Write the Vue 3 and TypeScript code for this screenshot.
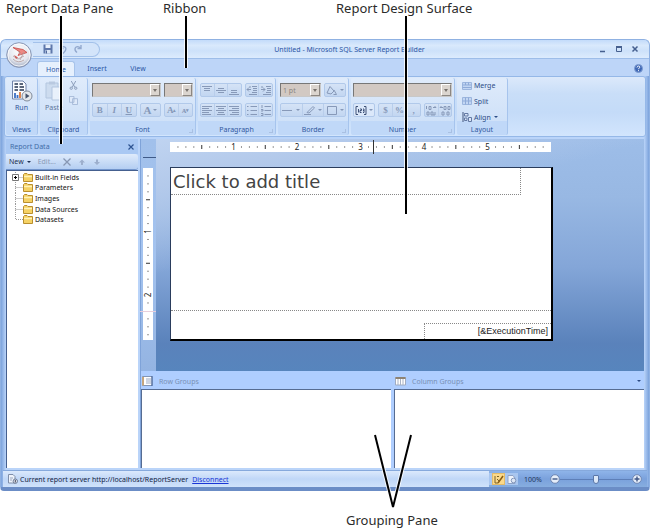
<script setup lang="ts">
import { ref } from 'vue'

interface Tool {
  label: string
  d: string
}
interface Mark {
  at: number
  kind: 'dot' | 'half' | 'inch'
  label: string
}

const EIGHTH = 7.94
const FOOTER_MARK = 18

function marks(count: number): Mark[] {
  return Array.from({ length: count }, (_, i) => {
    const n = i + 1
    return {
      at: n * EIGHTH,
      kind: n % 8 === 0 ? 'inch' : n % 4 === 0 ? 'half' : 'dot',
      label: String(n / 8),
    }
  })
}

const topMarks = marks(47)
// The footer has its own scale, so its marks start again as dots.
const sideMarks = marks(21)
  .filter((_, i) => i + 1 !== FOOTER_MARK)
  .map((m, i): Mark => (i + 1 >= FOOTER_MARK ? { ...m, kind: 'dot' } : m))

const tabs = ['Home', 'Insert', 'View']
const activeTab = ref('Home')
const zoom = ref(50)
const title = ref('Click to add title')

const fields = ['Built-in Fields', 'Parameters', 'Images', 'Data Sources', 'Datasets']

const vertical: Tool[] = [
  { label: 'Align top', d: 'M1 1.5H11M3 3.5H9M3 5.5H9' },
  { label: 'Align middle', d: 'M3 3.5H9M1 5.5H11M3 7.5H9' },
  { label: 'Align bottom', d: 'M3 5.5H9M3 7.5H9M1 9.5H11' },
]
const indents: Tool[] = [
  { label: 'Decrease indent', d: 'M6 1.5H11M7 3.5H11M7 5.5H11M6 7.5H11M3 9.5H11M5 4.5H1M3 2.5L1 4.5L3 6.5M4 1V3' },
  { label: 'Increase indent', d: 'M6 1.5H11M7 3.5H11M7 5.5H11M6 7.5H11M3 9.5H11M1 4.5H5M3 2.5L5 4.5L3 6.5M2 1V3' },
]
const horizontal: Tool[] = [
  { label: 'Align left', d: 'M1 1.5H11M1 3.5H8M1 5.5H11M1 7.5H8M1 9.5H10' },
  { label: 'Center', d: 'M1 1.5H11M3 3.5H9M1 5.5H11M3 7.5H9M2 9.5H10' },
  { label: 'Align right', d: 'M1 1.5H11M4 3.5H11M1 5.5H11M4 7.5H11M2 9.5H11' },
]
const lists: Tool[] = [
  { label: 'Bullets', d: 'M1 1.5H2.500M4.500 1.500H11M1 5.500H2.500M4.500 5.500H11M1 9.500H2.500M4.500 9.500H11' },
  { label: 'Numbering', d: 'M2 0V3M4.500 1.500H11M1 4.500H3V6H1M4.500 5.500H11M1 8.500H3V10.500H1M4.500 9.500H11' },
]
const borders: Tool[] = [
  { label: 'Border style', d: 'M0 5.500H10' },
  { label: 'Border color', d: 'M0 9.500H7M3 7.500L9 1.500L10.500 3L5 8Z' },
  { label: 'Borders', d: 'M1.500 1.500H10.500V9.500H1.500Z' },
]
const decimals: Tool[] = [
  { label: 'Increase decimal', d: 'M1.500 1V4M4 1.500H6V4.500H4ZM2 7H4V10H2ZM6 7H8V10H6ZM10 7V10H8M8 2.500H11M9.500 1L11 2.500' },
  { label: 'Decrease decimal', d: 'M5 1.500H7V4.500H5ZM9 1.500H11V4.500H9ZM3 7H5V10H3ZM8 7H10V10H8ZM4 2.500H1L2.500 1' },
]
</script>

<template>
  <div class="page">
    <header class="captions">
      <span class="cap-data">Report Data Pane</span>
      <span class="cap-ribbon">Ribbon</span>
      <span>Report Design Surface</span>
    </header>

    <main class="window">
      <div class="titlebar">
        <button class="orb" aria-label="Report Builder menu">
          <svg viewBox="0 0 26 26">
            <defs>
              <radialGradient id="orb" cx=".5" cy=".35" r=".65">
                <stop offset="0" stop-color="#fff" /><stop offset=".65" stop-color="#e3e6ee" /><stop offset="1" stop-color="#9aa5bd" />
              </radialGradient>
            </defs>
            <circle cx="13" cy="13" r="12.300" fill="url(#orb)" stroke="#8796b5" />
            <circle cx="13" cy="13" r="11" fill="none" stroke="#fff" stroke-opacity=".8" />
            <path d="M7 5.500L17 7.500L21 10.500L12 13.500L14 10Z" fill="#ec8a84" stroke="#c64a46" stroke-width=".8" />
            <path d="M7 14L12 17L18 14M7 17Q12 22 18 18M12 9L15 13M18 10L14 18" fill="none" stroke="#b39c9c" stroke-width=".8" />
            <path d="M8 13L12 15.500L10 17Z" fill="#cf5c58" />
          </svg>
        </button>
        <div class="quick">
          <button aria-label="Save">
            <svg viewBox="0 0 10 10"><path d="M.5 .5H9.500V9.500H.5Z" fill="#5f78ab" /><path d="M2.500 .5H7.500V4H2.500Z" fill="#e8f0fb" /><path d="M2.500 6H7.500V9.500H2.500Z" fill="#dbe7f7" /><path d="M3.500 6.500V9.500" stroke="#50689c" /></svg>
          </button>
          <button aria-label="Undo">
            <svg viewBox="0 0 10 10"><path d="M2 1V4.500H5.500M2.500 4Q5 1.500 7.500 3.500Q9 6 5 9.500" fill="none" stroke="#93a9ce" stroke-width="1.400" /></svg>
          </button>
          <button aria-label="Redo">
            <svg viewBox="0 0 10 10"><path d="M8 1V4.500H4.500M7.500 4Q5 1.500 2.500 3.500Q1 6 4 8.500" fill="none" stroke="#93a9ce" stroke-width="1.400" /></svg>
          </button>
        </div>
        <h1>Untitled - Microsoft SQL Server Report Builder</h1>
        <div class="controls">
          <button aria-label="Minimize"><svg viewBox="0 0 8 8"><path d="M1 6.500H6" stroke="#46608f" stroke-width="1.400" /></svg></button>
          <button aria-label="Maximize"><svg viewBox="0 0 8 8"><path d="M1.500 2H6.500V6.500H1.500Z" fill="none" stroke="#46608f" /><path d="M1 2H7" stroke="#46608f" stroke-width="2" /></svg></button>
          <button aria-label="Close"><svg viewBox="0 0 8 8"><path d="M1.500 1.500L6.500 6.500M6.500 1.500L1.500 6.500" stroke="#46608f" stroke-width="1.500" /></svg></button>
        </div>
      </div>

      <nav class="tabs">
        <button v-for="t in tabs" :key="t" :class="{ active: t === activeTab }" @click="activeTab = t">{{ t }}</button>
        <button class="help" aria-label="Help">
          <svg viewBox="0 0 9 9"><circle cx="4.500" cy="4.500" r="4" fill="#3f68b5" stroke="#7f9dd2" /><path d="M3 3.500Q3.200 2 4.600 2Q6 2.200 5.800 3.500Q4.500 4.300 4.500 5.200M4.500 6.200V7.200" fill="none" stroke="#fff" /></svg>
        </button>
      </nav>

      <section class="ribbon">
        <div class="group views">
          <div class="body">
            <button class="big">
              <svg viewBox="0 0 22 22">
                <path d="M1.500 1H12L15 4V19H1.500Z" fill="#fbfcff" stroke="#7184aa" />
                <path d="M3.500 4H7M8.500 4H12M3.500 7H7M8.500 7H13M3.500 10H7M8.500 10H13" stroke="#26354f" stroke-width="1.500" />
                <path d="M4 18V13M6.500 18V15" stroke="#3a6fc4" stroke-width="1.800" /><path d="M9 18V12" stroke="#d8783c" stroke-width="1.800" />
                <circle cx="16" cy="16" r="5" fill="#e4e8ec" stroke="#808a98" /><path d="M14.500 13.200L18.500 16L14.500 18.800Z" fill="#45536b" />
              </svg>
              Run
            </button>
          </div>
          <h2>Views</h2>
        </div>

        <div class="group clipboard">
          <div class="body">
            <button class="big faded">
              <svg viewBox="0 0 22 22">
                <path d="M3 3H15V18H3Z" fill="#cddcef" stroke="#b3c6df" /><path d="M6 1.500H12V4.500H6Z" fill="#b9c9e0" />
                <path d="M9 7H18V20H9Z" fill="#e9f1fb" stroke="#b3c6df" />
              </svg>
              Paste
            </button>
            <div class="stack">
              <button aria-label="Cut"><svg viewBox="0 0 10 10"><path d="M2.500 0L6.500 7M7.500 0L3.500 7" stroke="#8496b4" /><circle cx="2.500" cy="8" r="1.300" fill="none" stroke="#8496b4" /><circle cx="7.500" cy="8" r="1.300" fill="none" stroke="#8496b4" /></svg></button>
              <button aria-label="Copy"><svg viewBox="0 0 10 10"><path d="M.5 .5H5.500V7H.5ZM4 3H9.500V9.500H4Z" fill="#dfeafa" stroke="#a3b7d6" /></svg></button>
            </div>
          </div>
          <h2>Clipboard</h2>
        </div>

        <div class="group font">
          <div class="body rows">
            <div class="row">
              <label class="combo wide"><select aria-label="Font family"><option></option></select><i></i></label>
              <label class="combo"><select aria-label="Font size"><option></option></select><i></i></label>
            </div>
            <div class="row">
              <div class="set wide">
                <button class="glyph"><b>B</b></button><button class="glyph"><em>I</em></button><button class="glyph"><u>U</u></button>
              </div>
              <div class="set color"><button class="glyph large drop">A</button></div>
              <div class="set last"><button class="glyph">A<sup>▴</sup></button><button class="glyph">ᴀ<sup>▾</sup></button></div>
            </div>
          </div>
          <h2>Font</h2><span class="corner"></span>
        </div>

        <div class="group paragraph">
          <div class="body rows">
            <div class="row">
              <div class="set three"><button v-for="t in vertical" :key="t.label" :aria-label="t.label"><svg viewBox="0 0 12 11"><path :d="t.d" /></svg></button></div>
              <div class="set two"><button v-for="t in indents" :key="t.label" :aria-label="t.label"><svg viewBox="0 0 12 11"><path :d="t.d" /></svg></button></div>
            </div>
            <div class="row">
              <div class="set three"><button v-for="t in horizontal" :key="t.label" :aria-label="t.label"><svg viewBox="0 0 12 11"><path :d="t.d" /></svg></button></div>
              <div class="set two"><button v-for="t in lists" :key="t.label" :aria-label="t.label"><svg viewBox="0 0 12 11"><path :d="t.d" /></svg></button></div>
            </div>
          </div>
          <h2>Paragraph</h2><span class="corner"></span>
        </div>

        <div class="group border">
          <div class="body rows">
            <div class="row">
              <label class="combo wide"><select aria-label="Border width"><option>1 pt</option></select><i></i></label>
              <div class="set fill"><button class="drop" aria-label="Fill color"><svg viewBox="0 0 12 11"><path d="M1 8L4 1.500L8 6L5 9ZM8 5L10.500 9.500H7.500" /></svg></button></div>
            </div>
            <div class="row">
              <div class="set all"><button v-for="t in borders" :key="t.label" class="drop" :aria-label="t.label"><svg viewBox="0 0 12 11"><path :d="t.d" /></svg></button></div>
            </div>
          </div>
          <h2>Border</h2><span class="corner"></span>
        </div>

        <div class="group number">
          <div class="body rows">
            <div class="row"><label class="combo wide"><select aria-label="Number format"><option></option></select><i></i></label></div>
            <div class="row">
              <div class="set sample">
                <button class="drop" aria-label="Placeholder styles"><svg viewBox="0 0 12 11" class="dark"><path d="M3 1.500H1V9.500H3M9 1.500H11V9.500H9M3.500 4V7.500M5 4H6.500V5.500H5V7.500H6.500M8 4H9V7.500H8M8 5.500H9" /></svg></button>
              </div>
              <div class="set three"><button class="glyph">$</button><button class="glyph">%</button><button class="glyph">,</button></div>
              <div class="set two"><button v-for="t in decimals" :key="t.label" :aria-label="t.label"><svg viewBox="0 0 12 11"><path :d="t.d" /></svg></button></div>
            </div>
          </div>
          <h2>Number</h2><span class="corner"></span>
        </div>

        <div class="group layout">
          <div class="body lines">
            <button><svg viewBox="0 0 10 10"><path d="M.5 1.500H9.500V8.500H.5Z" fill="#c2d6f3" stroke="#9cb6de" /><path d="M.5 4H9.500M.5 6.500H9.500M3.500 1.500V4M6.500 1.500V4" stroke="#8fabd8" fill="none" /></svg>Merge</button>
            <button><svg viewBox="0 0 10 10"><path d="M.5 1.500H9.500V8.500H.5Z" fill="#c2d6f3" stroke="#9cb6de" /><path d="M3.500 1.500V8.500M6.500 1.500V8.500M.5 5H9.500" stroke="#8fabd8" /></svg>Split</button>
            <button class="drop"><svg viewBox="0 0 10 10"><path d="M1 0V10" stroke="#43577e" /><path d="M2.500 1.500H6V4H2.500ZM2.500 6H5V8.500H2.500ZM6.500 5.500H9.500V9.500H6.500Z" fill="#dbe6f8" stroke="#6379a3" /></svg>Align</button>
          </div>
          <h2>Layout</h2>
        </div>
      </section>

      <div class="work">
        <aside class="data">
          <div class="data-head">
            <h2>Report Data</h2>
            <button aria-label="Close pane"><svg viewBox="0 0 6 6"><path d="M.5 .5L5.500 5.500M5.500 .5L.5 5.500" stroke="#2d5391" stroke-width="1.200" /></svg></button>
          </div>
          <div class="data-tools">
            <button class="drop">New</button>
            <button class="off">Edit...</button>
            <button aria-label="Delete"><svg viewBox="0 0 8 8"><path d="M.5 .5L7.500 7.500M7.500 .5L.5 7.500" stroke="#8797b3" stroke-width="1.300" /></svg></button>
            <button aria-label="Move up"><svg viewBox="0 0 8 8"><path d="M4 1.500L7 4.500H5V7H3V4.500H1Z" fill="#9dafcd" /></svg></button>
            <button aria-label="Move down"><svg viewBox="0 0 8 8"><path d="M4 7L7 4H5V1.500H3V4H1Z" fill="#9dafcd" /></svg></button>
          </div>
          <div class="tree">
            <ul>
              <li v-for="(f, i) in fields" :key="f">
                <svg class="branch" viewBox="0 0 11 11">
                  <path :d="i < fields.length - 1 ? 'M3.5 0V11M3.5 5.5H11' : 'M3.5 0V5.5H11'" fill="none" stroke="#9a9a9a" stroke-dasharray="1 1" />
                  <g v-if="i === 0"><path d="M.5 2.500H6.500V8.500H.5Z" fill="#fff" stroke="#777" /><path d="M2 5.500H5M3.500 4V7" stroke="#000" /></g>
                </svg>
                <svg class="folder" viewBox="0 0 10 9"><path d="M.5 8.500V1.500L1.500 .5H4L5 1.500H9.500V8.500Z" fill="#f5d265" stroke="#b98f2f" /><path d="M1 3.500H9" stroke="#fff3b8" stroke-width="1.500" /></svg>
                <span>{{ f }}</span>
              </li>
            </ul>
          </div>
        </aside>

        <div class="design">
          <div class="surface">
            <div class="side">
              <svg class="side-ruler" viewBox="0 0 10 172">
                <template v-for="m in sideMarks" :key="m.at">
                  <text v-if="m.kind === 'inch'" :transform="`translate(8 ${m.at}) rotate(-90)`" text-anchor="middle">{{ m.label }}</text>
                  <path v-else-if="m.kind === 'half'" :d="`M3 ${m.at}H7`" />
                  <path v-else :d="`M4.5 ${m.at}H5.5`" />
                </template>
                <path class="divider" d="M-3 143.500H13" />
              </svg>
            </div>
            <div class="canvas">
              <svg class="top-ruler" viewBox="0 0 381 10">
                <template v-for="m in topMarks" :key="m.at">
                  <text v-if="m.kind === 'inch'" :x="m.at" y="8" text-anchor="middle">{{ m.label }}</text>
                  <path v-else-if="m.kind === 'half'" :d="`M${m.at} 3V7`" />
                  <path v-else :d="`M${m.at} 4.500V5.500`" />
                </template>
                <path class="cursor" d="M203.500 -2V12" />
              </svg>
              <article class="report">
                <input v-model="title" class="report-title" aria-label="Report title">
                <div class="report-body"></div>
                <footer><span>[&amp;ExecutionTime]</span></footer>
              </article>
            </div>
          </div>

          <div class="groups">
            <section>
              <h2><svg viewBox="0 0 11 10"><path d="M.5 .5H10V9.500H.5Z" fill="#fff" stroke="#8295b5" /><path d="M1 1V9.500" stroke="#c5a57c" stroke-width="2" /><path d="M4 3H9M4 5H9M4 7H9" stroke="#9caac4" /><path d="M10 0V10" stroke="#3e5c92" /></svg>Row Groups</h2>
              <div class="box"></div>
            </section>
            <section>
              <h2><svg viewBox="0 0 11 10"><path d="M.5 1.500H10.500V9H.5Z" fill="#fff" stroke="#a0abc0" /><path d="M.5 2H10.500" stroke="#8e8374" stroke-width="2" /><path d="M3 3V9M5.500 3V9M8 3V9" stroke="#a9b3c6" /></svg>Column Groups<button aria-label="Grouping options" class="drop"></button></h2>
              <div class="box"></div>
            </section>
          </div>
        </div>
      </div>

      <div class="status">
        <div class="server">
          <svg viewBox="0 0 10 10"><path d="M.5 .5H5L7 2.500V9H.5Z" fill="#eef3fb" stroke="#7f8ea9" /><path d="M2 4H5M2 6H4" stroke="#98a5bd" /><circle cx="7.300" cy="7.200" r="2.200" fill="#dfe5ef" stroke="#6d7b95" /><path d="M7.300 6V8.500" stroke="#445" /></svg>
          <span>Current report server http://localhost/ReportServer</span>
          <a href="#">Disconnect</a>
        </div>
        <div class="modes">
          <button class="on" aria-label="Design"><svg viewBox="0 0 10 9"><path d="M1 1V8H4M3 1.500H5M3 4L5 6" stroke="#7a6329" fill="none" /><path d="M4 8L9 1" stroke="#8a5d12" stroke-width="1.500" /></svg></button>
          <button aria-label="Run"><svg viewBox="0 0 10 9"><path d="M1 .5H6L8 3V8.500H1Z" fill="#eef3fb" stroke="#8fa3c6" /><circle cx="6.500" cy="5.500" r="2.300" fill="#dde6f4" stroke="#8497bb" /></svg></button>
        </div>
        <div class="zoom">
          <span>100%</span>
          <button aria-label="Zoom out"><svg viewBox="0 0 10 10"><circle cx="5" cy="5" r="4.300" fill="#e6eefa" stroke="#6f86b1" /><path d="M2.500 5H7.500" stroke="#3f5684" stroke-width="1.400" /></svg></button>
          <input v-model="zoom" type="range" min="0" max="100" aria-label="Zoom">
          <button aria-label="Zoom in"><svg viewBox="0 0 10 10"><circle cx="5" cy="5" r="4.300" fill="#e6eefa" stroke="#6f86b1" /><path d="M2.500 5H7.500M5 2.500V7.500" stroke="#3f5684" stroke-width="1.400" /></svg></button>
        </div>
      </div>
    </main>

    <p class="caption-bottom">Grouping Pane</p>

    <svg class="pointers" viewBox="0 0 650 529" aria-hidden="true">
      <g v-for="layer in ['halo', 'ink']" :key="layer" :class="layer">
        <path d="M61 16V144M186 16V68M406 16V214" />
        <path d="M375 435L393 507L411 435" />
      </g>
    </svg>
  </div>
</template>

<style>
body {
  margin: 0;
  background: #fff;
}
</style>

<style scoped>
* {
  box-sizing: border-box;
}
.page {
  position: relative;
  display: flex;
  flex-direction: column;
  min-height: 100vh;
  font: 7px/9px "Noto Sans", "Open Sans", sans-serif;
  color: #22365c;
}
button {
  display: flex;
  align-items: center;
  justify-content: center;
  margin: 0;
  padding: 0;
  border: 0;
  background: none;
  color: inherit;
  font: inherit;
}
svg {
  display: block;
  flex: none;
}
h1, h2, p, ul {
  margin: 0;
  padding: 0;
  font: inherit;
}
.drop::after {
  content: "";
  border: 2px solid transparent;
  border-top-color: currentColor;
  border-bottom: 0;
  margin-left: 3px;
}
.captions {
  display: flex;
  height: 39px;
  padding-left: 6px;
}
.captions, .caption-bottom {
  color: #2b2b2b;
  font: 13px/16px "Noto Sans", "Open Sans", sans-serif;
}
.cap-data { width: 157px; }
.cap-ribbon { width: 173px; }
.caption-bottom {
  height: 39px;
  padding: 21px 0 0 346px;
}
.pointers {
  position: absolute;
  top: 0;
  left: 0;
  width: 650px;
  height: 529px;
  fill: none;
  pointer-events: none;
}
.halo { stroke: #fff; stroke-width: 4; stroke-opacity: .8; }
.ink { stroke: #000; stroke-width: 2; }

.window {
  position: relative;
  display: flex;
  flex: 1;
  flex-direction: column;
  padding: 0 5px;
  border: 1px solid #8fb1e2;
  border-bottom: 4px solid #6b8dc6;
  border-radius: 6px 6px 4px 4px;
  background: linear-gradient(90deg, #7ca3dc, #bad4f9 5px, #bad4f9 calc(100% - 5px), #7ca3dc);
  overflow: hidden;
}
.titlebar {
  display: flex;
  align-items: center;
  height: 19px;
  margin: 0 -5px;
  border-bottom: 1px solid #9dbde9;
  background: linear-gradient(#c3dbfa, #d9e9fc 30%, #cde1fa 60%, #dcebfd);
}
.titlebar h1 {
  flex: 1;
  color: #2c55a5;
  text-align: center;
}
.orb {
  position: absolute;
  top: 2px;
  left: 5px;
  z-index: 2;
}
.orb svg { width: 26px; height: 26px; }
.quick {
  display: flex;
  align-items: center;
  gap: 5px;
  width: 67px;
  height: 15px;
  margin-left: 32px;
  padding-left: 10px;
  border: 1px solid #a3c1ea;
  border-left: 0;
  border-radius: 0 8px 8px 0;
  background: #d3e4fa;
}
.quick svg { width: 10px; height: 10px; }
.controls {
  display: flex;
  gap: 8px;
  padding-right: 10px;
}
.controls svg { width: 8px; height: 8px; }
.tabs {
  display: flex;
  align-items: flex-end;
  height: 17px;
  margin: 0 -5px;
  padding: 0 6px 0 36px;
  background: #bdd5f8;
}
.tabs button {
  width: 38px;
  height: 15px;
  margin-right: 3px;
  color: #2c57a6;
}
.tabs .active {
  border: 1px solid #a7c3ea;
  border-bottom: 0;
  border-radius: 3px 3px 0 0;
  background: #e6f0fd;
}
.tabs .help {
  width: 9px;
  margin: 0 0 0 auto;
}
.help svg { width: 9px; height: 9px; }

.ribbon {
  display: flex;
  gap: 2px;
  height: 61px;
  margin: 0 -2px;
  padding: 1px;
  border: 1px solid #95b8e8;
  border-radius: 3px;
  background: linear-gradient(#dce9fb, #c9def8 28%, #c4dbf8 60%, #d2e5fd);
}
.group {
  position: relative;
  display: flex;
  flex-direction: column;
  border-right: 1px solid #a6c4ed;
  border-radius: 2px;
  background: linear-gradient(#dfebfb, #cfe1f8 75%, #c0d8f8 76%);
}
.group h2 {
  height: 10px;
  color: #32589f;
  text-align: center;
}
.body {
  display: flex;
  flex: 1;
  justify-content: center;
}
.corner {
  position: absolute;
  right: 2px;
  bottom: 2px;
  width: 4px;
  height: 4px;
  border: 1px solid #a9c0e2;
  border-width: 0 1px 1px 0;
}
.views { width: 32px; }
.clipboard { width: 48px; }
.font { width: 106px; }
.paragraph { width: 78px; }
.border { width: 71px; }
.number { width: 104px; }
.layout { width: 51px; }
.big {
  flex-direction: column;
  align-self: flex-start;
  gap: 1px;
  padding-top: 2px;
  color: #31559a;
}
.big svg { width: 22px; height: 22px; }
.clipboard .body {
  justify-content: flex-start;
  padding-left: 3px;
}
.faded { color: #60759b; }
.stack {
  display: flex;
  flex-direction: column;
  gap: 6px;
  padding: 3px 0 0 4px;
}
.stack svg { width: 9px; height: 9px; }
.rows {
  flex-direction: column;
  justify-content: flex-start;
  gap: 6px;
  padding: 5px 2px 0;
}
.row {
  display: flex;
  gap: 3px;
  height: 14px;
}
.combo {
  display: flex;
  width: 29px;
  border: 1px solid #777;
  border-right-color: #c8c8c8;
  border-bottom-color: #c8c8c8;
  background: #d2c9c3;
}
.combo.wide { flex: 1; }
.combo select {
  flex: 1;
  width: 0;
  padding: 0 2px;
  border: 0;
  outline: 0;
  appearance: none;
  background: none;
  color: #8b8580;
  font: inherit;
}
.combo i {
  display: flex;
  align-items: center;
  justify-content: center;
  width: 10px;
  border: 1px solid #8c8782;
  border-top-color: #fff;
  border-left-color: #fff;
  background: #dbd5cf;
  pointer-events: none;
}
.combo i::after {
  content: "";
  border: 2px solid transparent;
  border-top: 3px solid #77716c;
  border-bottom: 0;
}
.set {
  display: flex;
  border: 1px solid #b1c9ea;
  border-radius: 2px;
  background: linear-gradient(#d5e3f6, #c2d6f1);
}
.set button {
  flex: 1;
  color: #8598b8;
}
.set button + button { border-left: 1px solid #b9ceeb; }
.set svg { width: 12px; height: 11px; }
.set path {
  fill: none;
  stroke: #8799b8;
}
.set .dark path { stroke: #3e5176; }
.set .drop::after { margin-left: 2px; border-width: 2px 2px 0; }
.font .wide { width: 45px; }
.color { width: 22px; }
.font .last, .font .combo:last-child { width: 29px; }
.set .glyph { font: bold 9px/10px "Liberation Serif", serif; }
.set .large { font-size: 11px; }
.glyph sup { font-size: 5px; line-height: 5px; }
.paragraph .three { width: 43px; }
.paragraph .two { width: 29px; }
.fill { width: 22px; }
.all { flex: 1; }
.sample { width: 22px; background: #dbe8fa; }
.number .three { flex: 1; }
.number .two { width: 28px; }
.lines {
  flex-direction: column;
  align-items: flex-start;
  justify-content: space-around;
  padding: 0 0 0 5px;
}
.lines button {
  gap: 2px;
  height: 12px;
  color: #2d4d86;
}
.lines svg { width: 10px; height: 10px; }
.lines .drop::after { margin-left: 1px; }

.work {
  display: flex;
  flex: 1;
  padding-top: 2px;
}
.data {
  display: flex;
  flex-direction: column;
  width: 132px;
}
.data-head {
  display: flex;
  align-items: center;
  justify-content: space-between;
  height: 15px;
  padding: 0 4px;
  background: #a9c8f3;
  color: #426da8;
}
.data-head svg { width: 6px; height: 6px; }
.data-tools {
  display: flex;
  align-items: center;
  height: 16px;
  gap: 7px;
  padding-left: 3px;
  border-bottom: 1px solid #7295cc;
  border-radius: 0 3px 3px 0;
  background: linear-gradient(#dfebfb, #b4cef2);
  color: #1d2f50;
}
.data-tools .off { color: #8a9bb8; }
.data-tools svg { width: 8px; height: 8px; }
.tree {
  flex: 1;
  padding: 1px 0 0 5px;
  border: 1px solid #45608f;
  border-width: 1px 0 0 1px;
  background: #fff;
  color: #111;
}
.tree ul {
  display: grid;
  grid-template-rows: repeat(5, minmax(0, 1fr));
  height: 53px;
  list-style: none;
}
.tree li {
  display: flex;
  align-items: center;
}
.branch { width: 11px; height: 11px; }
.folder { width: 10px; height: 9px; margin-right: 2px; }

.design {
  display: flex;
  flex: 1;
  flex-direction: column;
  margin-left: 2px;
  border-left: 1px solid #7fa3d9;
}
.surface {
  display: flex;
  flex: 1;
  background:
    linear-gradient(165deg, #c0d4f1 0%, #b4caeb 14%, transparent 38%),
    linear-gradient(#9dbde8 0%, #98b8e3 25%, #84a6d8 55%, #5a82bb 88%, #5785bd 100%);
}
.side {
  width: 15px;
  padding: 29px 2px 0;
  background: linear-gradient(#a1c0eb, #a4c3ef 50%, #94b4e2);
}
.side::before {
  content: "";
  display: block;
  height: 1px;
  margin: -11px -2px 10px 0;
  background: #3f5a88;
}
.side-ruler { width: 10px; height: 172px; background: #fff; overflow: visible; }
.side-ruler .divider { stroke: #e9cfdc; }
.canvas {
  display: flex;
  flex: 1;
  flex-direction: column;
  align-items: flex-start;
  gap: 15px;
  padding: 3px 0 30px 14px;
}
.top-ruler { width: 381px; height: 10px; background: #fff; overflow: visible; }
.side-ruler path, .top-ruler path { stroke: #333; }
.side-ruler text, .top-ruler text {
  fill: #222;
  font: 8px "Noto Sans", sans-serif;
}
.report {
  display: flex;
  flex-direction: column;
  width: 383px;
  height: 174px;
  border: 1px solid #2a3c5c;
  border-right: 2px solid #000;
  border-bottom: 2px solid #000;
  background: #fff;
}
.report-title {
  width: 350px;
  height: 27px;
  padding: 0 2px;
  border: 0;
  border-right: 1px dotted #888;
  border-bottom: 1px dotted #888;
  border-radius: 0;
  outline: 0;
  background: none;
  color: #444;
  font: 18px/24px "DejaVu Sans", Verdana, sans-serif;
}
.report-body {
  flex: 1;
  border-bottom: 1px dotted #888;
}
.report footer {
  display: flex;
  align-items: flex-end;
  justify-content: flex-end;
  height: 28px;
}
.report footer span {
  width: 127px;
  height: 16px;
  padding-right: 3px;
  border: 1px dotted #888;
  border-right: 0;
  border-bottom: 0;
  color: #222;
  font: 9px/15px "Liberation Sans", Arial, sans-serif;
  text-align: right;
}
.groups {
  display: flex;
  height: 97px;
  gap: 3px;
  background: #afceff;
}
.groups section {
  display: flex;
  flex: 1;
  flex-direction: column;
}
.groups h2 {
  display: flex;
  align-items: center;
  height: 18px;
  gap: 6px;
  padding: 2px 3px 0 1px;
  color: #7890b5;
}
.groups h2 svg { width: 11px; height: 10px; }
.groups h2 .drop { margin-left: auto; color: #2c4b83; }
.box {
  flex: 1;
  border: 1px solid #566c92;
  border-width: 1px 0 0 1px;
  background: #fff;
}

.status {
  display: flex;
  align-items: center;
  height: 17px;
  margin: 2px -3px 0;
  border-top: 1px solid #86a9dc;
  background: linear-gradient(#8eb4e9, #7aa1dc 50%, #86addf);
}
.server {
  display: flex;
  flex: 1;
  align-items: center;
  align-self: stretch;
  gap: 2px;
  padding-left: 5px;
  background: linear-gradient(#dbe9fc, #c0d7f7 50%, #cfe2fb);
  color: #15233f;
}
.server svg { width: 10px; height: 10px; }
.server a {
  margin-left: 2px;
  color: #1a35d6;
}
.modes {
  display: flex;
  width: 29px;
  padding-left: 3px;
  background: #a9c6ef;
}
.modes button { width: 13px; height: 12px; }
.modes .on {
  border: 1px solid #e3bb68;
  background: #fbd98a;
}
.modes svg { width: 10px; height: 9px; }
.zoom {
  display: flex;
  align-items: center;
  width: 129px;
  padding: 0 5px 0 6px;
}
.zoom span { flex: 1; }
.zoom svg { width: 10px; height: 10px; }
.zoom input {
  width: 72px;
  height: 10px;
  margin: 0;
  appearance: none;
  background: linear-gradient(#5d7fb8, #5d7fb8) center / 100% 1px no-repeat;
}
.zoom input::-webkit-slider-thumb {
  width: 6px;
  height: 9px;
  appearance: none;
  border: 1px solid #5a76a8;
  border-radius: 1px 1px 3px 3px;
  background: #dce8f8;
}
</style>
